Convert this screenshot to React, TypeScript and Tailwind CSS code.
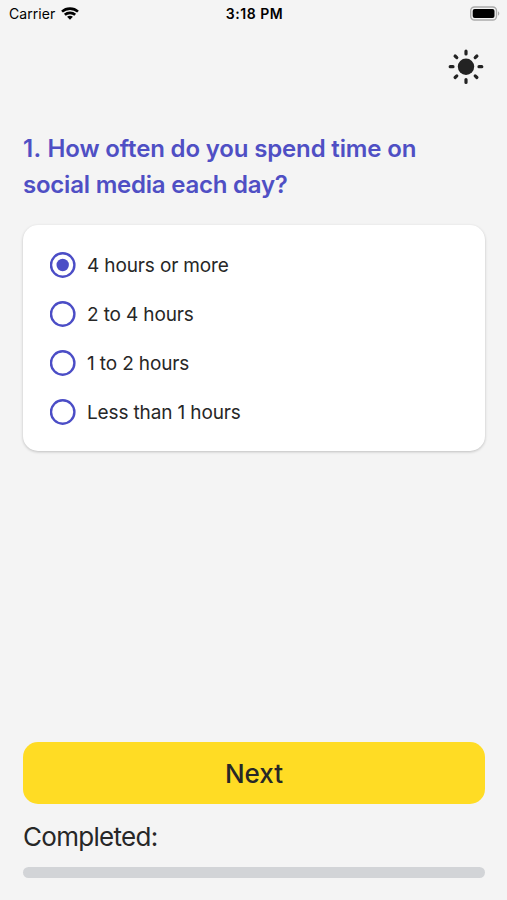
import { useState } from "react";

const options = ["4 hours or more", "2 to 4 hours", "1 to 2 hours", "Less than 1 hours"];

function StatusBar() {
  return (
    <div className="grid h-7 grid-cols-3 items-center pl-[9px] pr-[7px] text-black">
      <div className="flex items-center gap-[6px] pb-px">
        <span className="text-[14px] leading-none tracking-[0.05px]">Carrier</span>
        <svg width="18" height="14" viewBox="0 0 18 14" fill="none" stroke="currentColor" strokeWidth="2.6">
          <path d="M1 4.6C5.4 .6 12.6 .6 17 4.6" />
          <path d="M3.8 7.8C6.7 5.2 11.3 5.2 14.2 7.8" />
          <path d="M6.1 9.8C7.8 8.4 10.2 8.4 11.9 9.8L9 12.8Z" fill="currentColor" stroke="none" />
        </svg>
      </div>
      <span className="text-center text-[14px] font-semibold leading-none tracking-[0.55px]">3:18 PM</span>
      <svg className="mb-[2px] justify-self-end" width="31" height="15" viewBox="0 0 31 15" fill="none">
        <rect x="1.7" y="1" width="25.8" height="13" rx="3.8" stroke="#aaaaaa" strokeWidth="1.4" />
        <rect x="3.7" y="3" width="21.8" height="9" rx="2" fill="#000" />
        <path d="M29 5.3C30.8 6.1 30.8 8.9 29 9.7Z" fill="#aaaaaa" />
      </svg>
    </div>
  );
}

function SunIcon() {
  return (
    <svg width="36" height="36" viewBox="-18 -18 36 36" stroke="#232323" strokeWidth="3.2" strokeLinecap="round">
      <circle cy="-.3" r="8.2" fill="#232323" stroke="none" />
      <path d="M0-15.8V-13M0 12.6V15.4M-15.8-.3H-13M13-.3H15.8M-10.9-11L-9.2-9.4M9.2 8.9L10.9 10.5M-10.9 10.5L-9.2 8.9M9.2-9.4L10.9-11" />
    </svg>
  );
}

function RadioIcon({ checked }: { checked: boolean }) {
  return (
    <svg width="26" height="26" viewBox="0 0 26 26" fill="none">
      <circle cx="12.7" cy="13" r="11.7" stroke="#4b4dc6" strokeWidth="2.4" />
      {checked && <circle cx="12.7" cy="13" r="6.2" fill="#4b4dc6" />}
    </svg>
  );
}

export default function App() {
  const [selected, setSelected] = useState(0);

  return (
    <div className="flex h-[900px] w-[507px] flex-col bg-[#f4f4f4] font-['Inter',sans-serif] text-[#272727]">
      <StatusBar />

      <div className="flex justify-end pr-[23px] pt-[21px]">
        <button aria-label="Toggle theme">
          <SunIcon />
        </button>
      </div>

      <main className="flex flex-1 flex-col pl-[23px] pr-[22px] pt-[46px]">
        <h1 className="text-[24px] font-semibold leading-[36px] tracking-[-0.22px] text-[#4f4fc4]">
          <span className="tracking-[0.4px]">1. </span>
          <span className="tracking-[-0.15px]">How often do you spend time on</span>
          <br />
          social media each day?
        </h1>

        <div
          role="radiogroup"
          className="mt-[22px] flex h-[226px] flex-col rounded-[15px] bg-white px-[27px] pt-[15px] shadow-[0_1px_3px_rgba(0,0,0,0.22)]"
        >
          {options.map((label, i) => (
            <button
              key={label}
              role="radio"
              aria-checked={selected === i}
              onClick={() => setSelected(i)}
              className="flex h-[49px] items-center gap-[11px] text-left"
            >
              <RadioIcon checked={selected === i} />
              <span className="pt-[3px] text-[19px] tracking-[-0.14px]">{label}</span>
            </button>
          ))}
        </div>

        <div className="mt-auto pb-[22px]">
          <button className="h-[62px] w-full rounded-[15px] bg-[#ffdc24] text-[26px] font-medium">
            Next
          </button>
          <p className="mt-[13px] text-[26px] leading-[39px] tracking-[-0.7px]">Completed:</p>
          <div className="mt-[11px] h-[11px] rounded-full bg-[#d2d4d7]" />
        </div>
      </main>
    </div>
  );
}
